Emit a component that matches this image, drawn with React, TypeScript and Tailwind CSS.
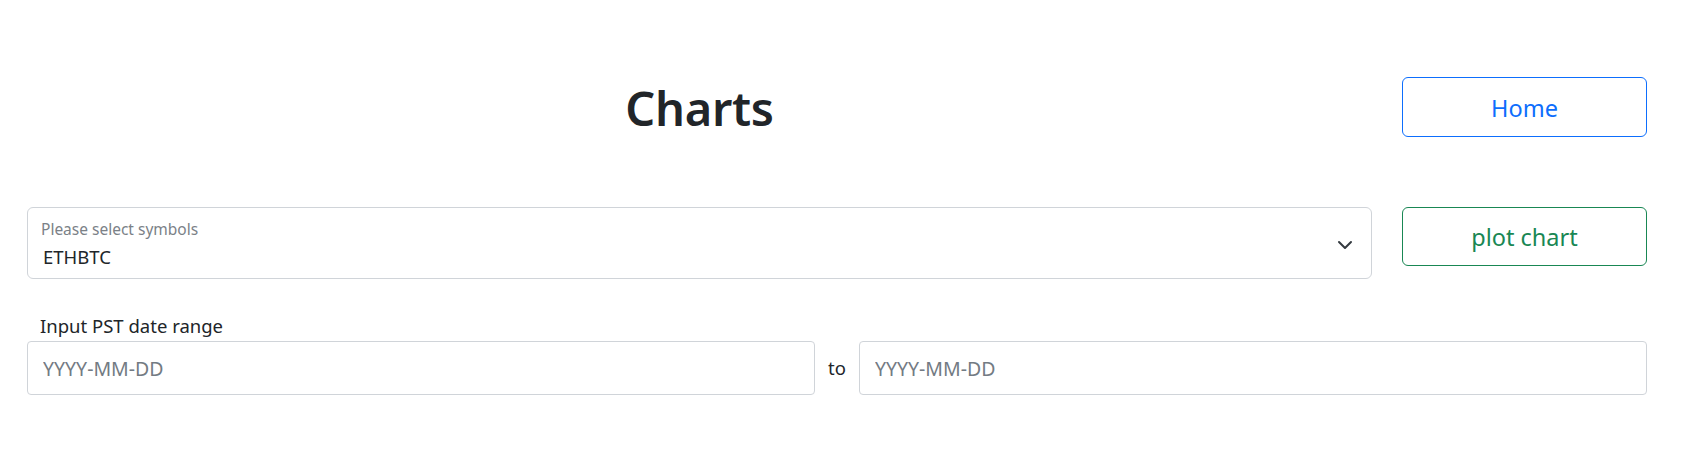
import React from 'react'

const font = { fontFamily: '"Noto Sans", "Open Sans", sans-serif' }

const Charts = () => {
  return (
    <div className="w-[1691px] h-[456px] bg-white text-[#212529]" style={font}>
      <div className="w-[1620px] ml-[27px] pt-[77px]">
        {/* title row */}
        <div className="grid grid-cols-[1345px_245px] gap-x-[30px] items-center">
          <h1 className="text-center text-[47px] font-semibold leading-none tracking-[-0.3px] mt-[3px]">Charts</h1>
          <button className="h-[60px] rounded-[6px] border border-[#0d6efd] text-[#0d6efd] text-[23.5px] bg-white pt-[3px]">
            Home
          </button>
        </div>

        {/* symbol select row */}
        <div className="grid grid-cols-[1345px_245px] gap-x-[30px] items-start mt-[70px]">
          <div className="relative h-[72px] rounded-[6px] border border-[#d0d4d9] px-[13px] pt-[11px]">
            <div className="text-[15.5px] leading-[20px] text-[#7b8187]">Please select symbols</div>
            <div className="text-[18.5px] leading-[26px] pl-[2px] mt-[5px]">ETHBTC</div>
            <svg className="absolute right-[18px] top-[32px]" width="16" height="10" viewBox="0 0 16 10" fill="none">
              <path d="M2 2l6 6 6-6" stroke="#343a40" strokeWidth="2" strokeLinecap="round" strokeLinejoin="round" />
            </svg>
          </div>
          <button className="h-[59px] rounded-[6px] border border-[#198754] text-[#198754] text-[23.5px] bg-white pt-[3px]">
            plot chart
          </button>
        </div>

        {/* date range */}
        <div className="mt-[35px]">
          <div className="text-[18.5px] leading-[24px] pl-[13px]">Input PST date range</div>
          <div className="flex items-center gap-[13px] mt-[3px]">
            <input
              className="flex-1 h-[54px] rounded-[4px] border border-[#d0d4d9] px-[15px] text-[19.5px] placeholder:text-[#737b83] outline-none"
              placeholder="YYYY-MM-DD"
              style={font}
            />
            <span className="text-[18.5px]">to</span>
            <input
              className="flex-1 h-[54px] rounded-[4px] border border-[#d0d4d9] px-[15px] text-[19.5px] placeholder:text-[#737b83] outline-none"
              placeholder="YYYY-MM-DD"
              style={font}
            />
          </div>
        </div>
      </div>
    </div>
  )
}

export default function App() {
  return <Charts />
}
